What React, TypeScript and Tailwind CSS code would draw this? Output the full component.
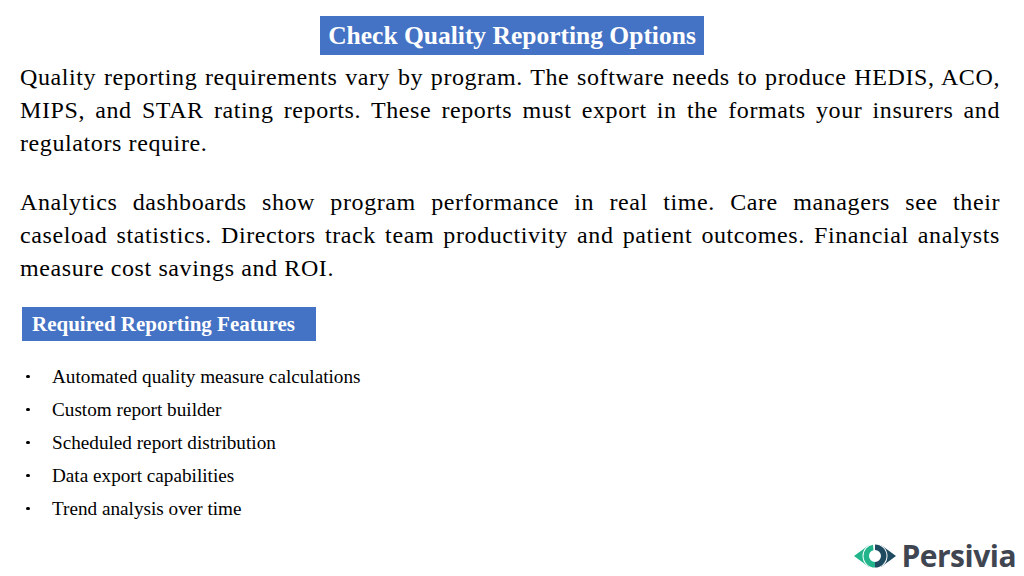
import { Fragment } from 'react'

const paragraphs = [
  [
    'Quality reporting requirements vary by program. The software needs to produce HEDIS, ACO,',
    'MIPS, and STAR rating reports. These reports must export in the formats your insurers and',
    'regulators require.',
  ],
  [
    'Analytics dashboards show program performance in real time. Care managers see their',
    'caseload statistics. Directors track team productivity and patient outcomes. Financial analysts',
    'measure cost savings and ROI.',
  ],
]

const features = [
  'Automated quality measure calculations',
  'Custom report builder',
  'Scheduled report distribution',
  'Data export capabilities',
  'Trend analysis over time',
]

function PersiviaLogo() {
  return (
    <div className="flex items-center gap-[5px]">
      <svg width="42" height="28" viewBox="0 0 42 28" aria-hidden="true">
        <path d="M0 14 L15 3 L15 25 Z" fill="#22b48b" />
        <path d="M42 14 L27 3 L27 25 Z" fill="#1e4b5f" />
        <circle cx="21" cy="14" r="12.5" fill="#fff" />
        <path d="M21 2.5 A11.5 11.5 0 0 1 32.5 14 L27 14 A6 6 0 0 0 21 8 Z" fill="#1e4b5f" />
        <path d="M32.5 14 A11.5 11.5 0 0 1 21 25.5 L21 20 A6 6 0 0 0 27 14 Z" fill="#1e4b5f" />
        <path d="M21 25.5 A11.5 11.5 0 0 1 9.5 14 L15 14 A6 6 0 0 0 21 20 Z" fill="#22b48b" />
        <path d="M9.5 14 A11.5 11.5 0 0 1 19 2.7 L19.5 8.2 A6 6 0 0 0 15 14 Z" fill="#22b48b" />
      </svg>
      <span className="font-['Open_Sans',sans-serif] text-[30px] font-bold leading-none tracking-[-0.5px] text-[#3f4651]">
        Persivia
      </span>
    </div>
  )
}

export default function App() {
  return (
    <div className="relative h-[576px] w-[1024px] overflow-hidden bg-white font-['Liberation_Serif',serif] text-black">
      <div className="flex justify-center pt-[16px]">
        <h1 className="bg-[#4472c4] px-[8px] py-[4px] text-[25.5px] font-bold leading-[31px] text-white">
          Check Quality Reporting Options
        </h1>
      </div>

      <div className="flex flex-col gap-[26px] pl-[20px] pr-[24px] pt-[6px] text-[24px] leading-[33px] tracking-[0.6px]">
        {paragraphs.map((lines, i) => (
          <p key={i}>
            {lines.map((line, j) => (
              <span
                key={j}
                className={
                  j < lines.length - 1
                    ? 'block whitespace-nowrap [text-align:justify] [text-align-last:justify]'
                    : 'block whitespace-nowrap'
                }
              >
                {line}
              </span>
            ))}
          </p>
        ))}
      </div>

      <div className="mt-[22px] pl-[22px]">
        <h2 className="w-[294px] bg-[#4472c4] py-[4px] pl-[10px] text-[21px] font-bold leading-[26px] text-white">
          Required Reporting Features
        </h2>
      </div>

      <ul className="mt-[19px] text-[19.2px] leading-[33px]">
        {features.map((f) => (
          <Fragment key={f}>
            <li className="flex items-center">
              <span className="flex w-[52px] pl-[26px]">
                <span className="h-[3.5px] w-[3.5px] rounded-full bg-black" />
              </span>
              <span>{f}</span>
            </li>
          </Fragment>
        ))}
      </ul>

      <div className="absolute bottom-[5px] right-[8px]">
        <PersiviaLogo />
      </div>
    </div>
  )
}
